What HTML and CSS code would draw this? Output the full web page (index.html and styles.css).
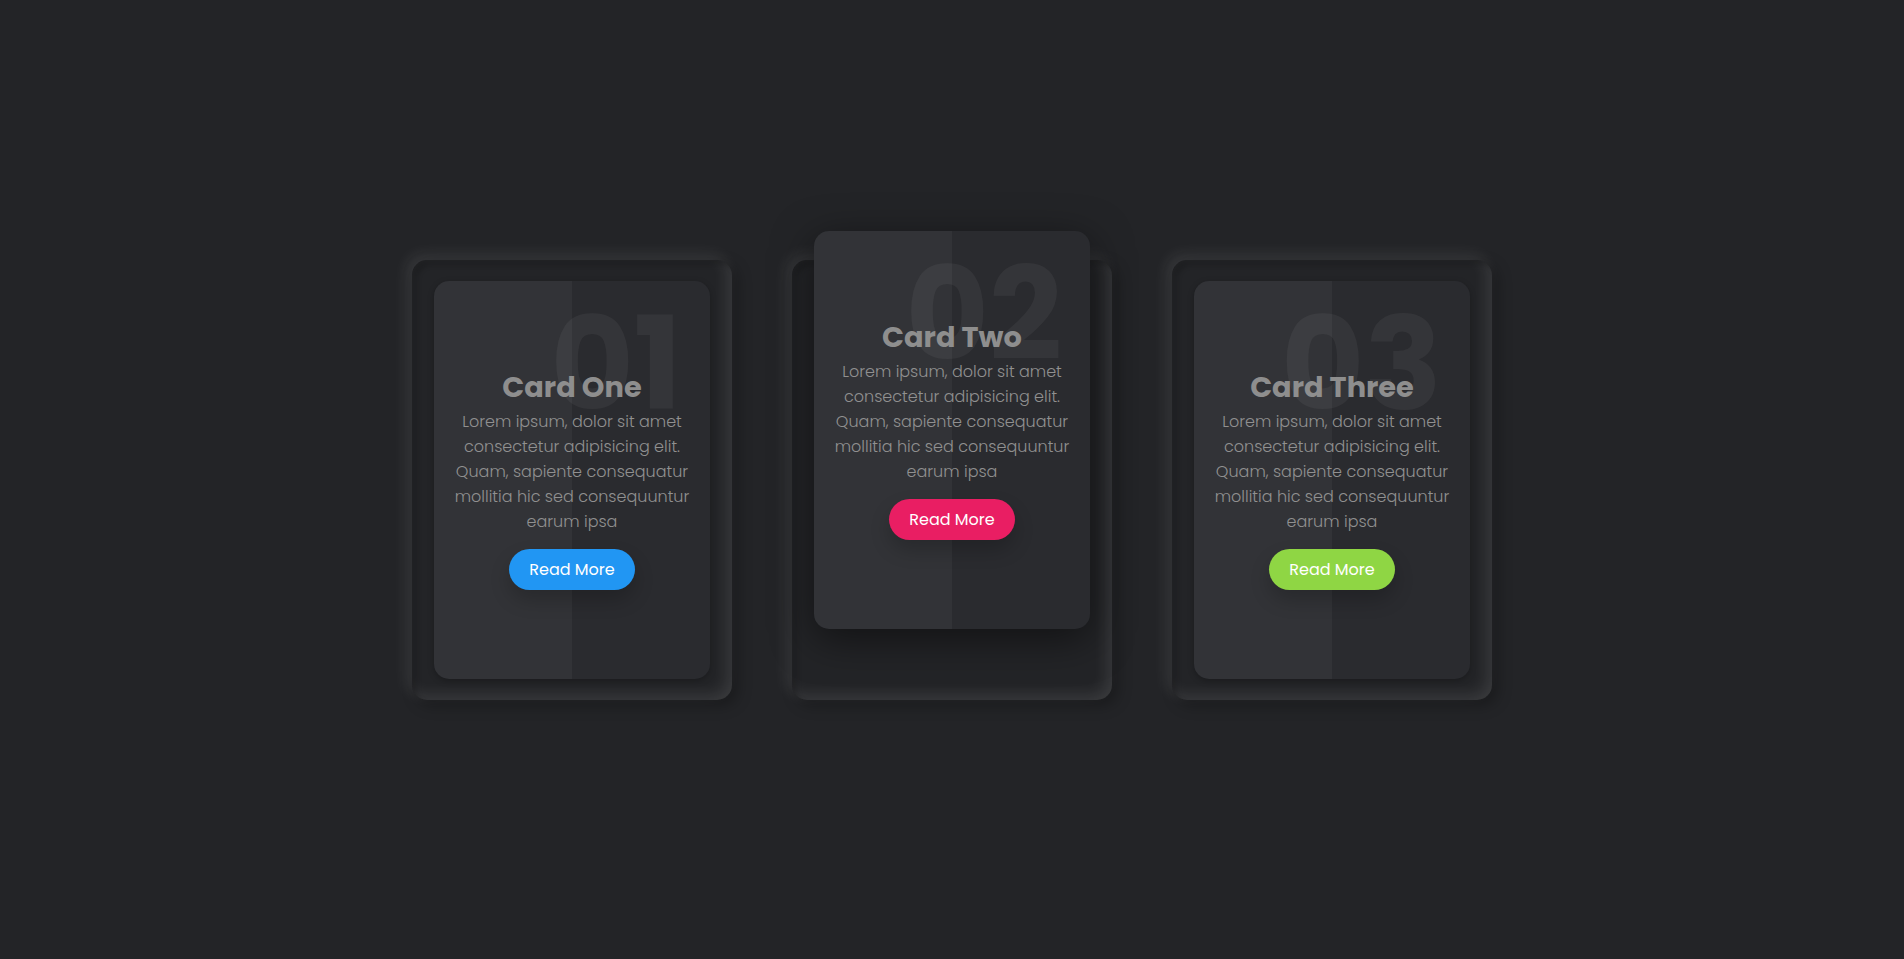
FILE: index.html
```html
<!DOCTYPE html>
<html lang="en">
<head>
<meta charset="UTF-8">
<title>Neumorphism Cards</title>
<link rel="stylesheet" href="styles.css">
</head>
<body>
  <div class="container">
    <div class="card">
      <div class="box">
        <div class="content">
          <h2 class="num">01</h2>
          <h3 class="title">Card One</h3>
          <p class="text">Lorem ipsum, dolor sit amet consectetur adipisicing elit. Quam, sapiente consequatur mollitia hic sed consequuntur earum ipsa</p>
          <a href="#" class="btn btn-blue">Read More</a>
        </div>
      </div>
    </div>
    <div class="card card-active">
      <div class="box">
        <div class="content">
          <h2 class="num">02</h2>
          <h3 class="title">Card Two</h3>
          <p class="text">Lorem ipsum, dolor sit amet consectetur adipisicing elit. Quam, sapiente consequatur mollitia hic sed consequuntur earum ipsa</p>
          <a href="#" class="btn btn-pink">Read More</a>
        </div>
      </div>
    </div>
    <div class="card">
      <div class="box">
        <div class="content">
          <h2 class="num">03</h2>
          <h3 class="title">Card Three</h3>
          <p class="text">Lorem ipsum, dolor sit amet consectetur adipisicing elit. Quam, sapiente consequatur mollitia hic sed consequuntur earum ipsa</p>
          <a href="#" class="btn btn-green">Read More</a>
        </div>
      </div>
    </div>
  </div>
</body>
</html>
```

FILE: styles.css
```css
* {
  margin: 0;
  padding: 0;
  box-sizing: border-box;
}

body {
  display: flex;
  justify-content: center;
  align-items: center;
  min-height: 100vh;
  background: #232427;
  font-family: "Poppins", "Open Sans", "Liberation Sans", sans-serif;
}

.container {
  display: flex;
  justify-content: center;
  align-items: center;
  flex-wrap: wrap;
  max-width: 1200px;
  margin: 40px 0;
}

.card {
  display: flex;
  width: 320px;
  height: 440px;
  margin: 30px;
  padding: 21px 22px;
  border-radius: 15px;
  box-shadow:
    inset 5px 5px 5px rgba(0, 0, 0, 0.2),
    inset -5px -5px 15px rgba(255, 255, 255, 0.1),
    5px 5px 15px rgba(0, 0, 0, 0.3),
    -5px -5px 15px rgba(255, 255, 255, 0.1);
}

.box {
  position: relative;
  flex: 1;
  display: flex;
  justify-content: center;
  align-items: center;
  background: #2a2b2f;
  border-radius: 15px;
  overflow: hidden;
  box-shadow: 0 2px 6px rgba(0, 0, 0, 0.25);
}

.box::before {
  content: "";
  position: absolute;
  top: 0;
  left: 0;
  width: 50%;
  height: 100%;
  background: rgba(255, 255, 255, 0.04);
}

.card-active .box {
  transform: translateY(-50px);
  box-shadow: 0 10px 40px rgba(0, 0, 0, 0.5);
}

.content {
  padding: 20px 18px 23px;
  text-align: center;
}

.num {
  position: absolute;
  top: -12px;
  right: 28px;
  font-size: 128px;
  font-weight: 700;
  line-height: 192px;
  color: rgba(255, 255, 255, 0.05);
}

.title {
  position: relative;
  font-size: 28.8px;
  font-weight: 700;
  line-height: 43px;
  color: #8e8e8e;
}

.text {
  position: relative;
  font-size: 16px;
  font-weight: 300;
  line-height: 25px;
  color: #909090;
}

.btn {
  position: relative;
  display: inline-block;
  margin-top: 15px;
  padding: 8px 20px;
  border-radius: 22px;
  font-size: 16px;
  line-height: 25px;
  color: #fff;
  text-decoration: none;
  box-shadow: 0 10px 20px rgba(0, 0, 0, 0.2);
}

.btn-blue { background: #2196f3; }
.btn-pink { background: #e91e63; }
.btn-green { background: #8fd644; }
```
